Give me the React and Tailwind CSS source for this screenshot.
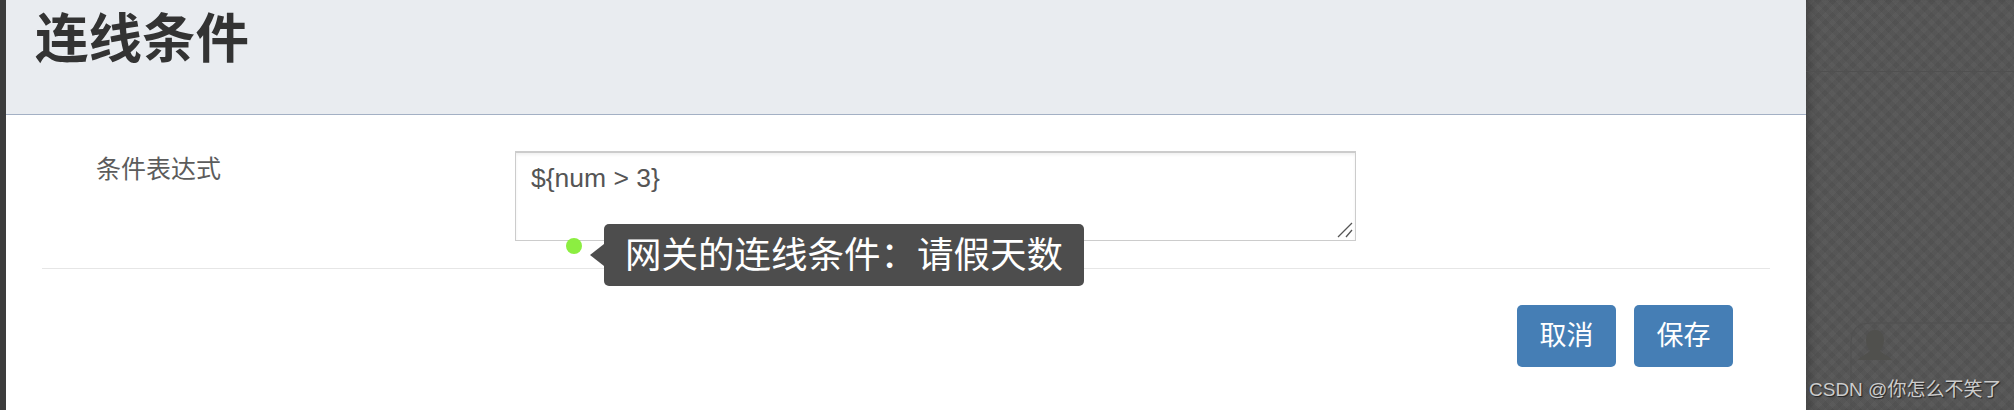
const fontStack = "font-['Liberation_Sans','Noto_Sans_CJK_SC',sans-serif]";

function ActionButton({ children }) {
  return (
    <button className="w-[99px] h-[62px] rounded-[5px] bg-[#457eb5] text-white text-[27px] leading-none">
      {children}
    </button>
  );
}

function Backdrop() {
  return (
    <div className="relative flex-1 bg-[#555555] bg-[repeating-linear-gradient(45deg,rgba(255,255,255,0.015)_0px,rgba(255,255,255,0.015)_5px,rgba(0,0,0,0.02)_5px,rgba(0,0,0,0.02)_10px),repeating-linear-gradient(-45deg,rgba(255,255,255,0.015)_0px,rgba(255,255,255,0.015)_5px,rgba(0,0,0,0.02)_5px,rgba(0,0,0,0.02)_10px)] shadow-[inset_8px_0_8px_-4px_rgba(0,0,0,0.2)]">
      <div className="absolute left-0 right-0 top-[71px] h-px bg-[#505050]" />
      {/* the faint card that shows through behind the watermark */}
      <svg className="absolute left-[44px] top-[322px]" width="164" height="88" fill="none">
        <path d="M1 88V20Q1 1 20 1H164" stroke="#505050" strokeWidth="1" />
        <path d="M25 8c6 0 9 5 9 10s-2 8-4 11c3 3 9 5 12 9H8c3-4 9-6 12-9-2-3-4-6-4-11s3-10 9-10z" fill="#50504d" />
      </svg>
      <span className="absolute left-[3px] top-[378px] whitespace-nowrap text-[19px] leading-[24px] text-[#cccccc] [text-shadow:1px_1px_1px_#222]">
        CSDN @你怎么不笑了
      </span>
    </div>
  );
}

export default function App() {
  return (
    <div className={`flex w-[2014px] h-[410px] overflow-hidden bg-[#3a3a3a] ${fontStack}`}>
      <div className="w-[6px] bg-[#3c3c3c]" />
      <div className="relative w-[1800px] bg-white flex flex-col">
        <div className="h-[115px] shrink-0 bg-[#e9ecf0] border-b border-[#a3b0c4] pl-[29px] pt-[5px]">
          <h1 className="text-[53.5px] leading-[70px] font-bold text-[#333]">连线条件</h1>
        </div>

        <div className="flex pt-[36px] h-[154px] mx-[36px] border-b border-[#e6e6e6]">
          <label className="w-[473px] pl-[54px] pt-[1px] text-[25px] leading-[34px] text-[#5c5c5c]">
            条件表达式
          </label>
          <div className="relative w-[841px] h-[90px]">
            <textarea
              defaultValue="${num > 3}"
              className="block w-full h-full border border-t-2 border-[#cccccc] bg-white px-[15px] py-[7px] text-[26.5px] leading-[36px] text-[#555] shadow-[inset_0_2px_3px_rgba(0,0,0,0.06)] outline-none resize-none"
            />
            <svg className="absolute right-[3px] bottom-[3px]" width="16" height="16" stroke="#555" strokeWidth="1.3">
              <path d="M1 15L15 1M9 15L15 8" />
            </svg>
          </div>
        </div>

        <div className="flex justify-end gap-[18px] pt-[36px] pr-[73px]">
          <ActionButton>取消</ActionButton>
          <ActionButton>保存</ActionButton>
        </div>

        {/* dot and tooltip sit over the form */}
        <div className="absolute left-[560px] top-[238px] w-[16px] h-[16px] rounded-full bg-[#8cee41]" />
        <div className="absolute left-[598px] top-[224px] flex items-center h-[62px] w-[480px] rounded-[5px] bg-[#4d4d4d] pl-[21px] pt-[3px] text-white text-[36.5px] whitespace-nowrap">
          <span className="absolute left-[-14px] top-[20px] border-y-[11px] border-y-transparent border-r-[14px] border-r-[#4d4d4d]" />
          网关的连线条件：请假天数
        </div>
      </div>
      <Backdrop />
    </div>
  );
}
